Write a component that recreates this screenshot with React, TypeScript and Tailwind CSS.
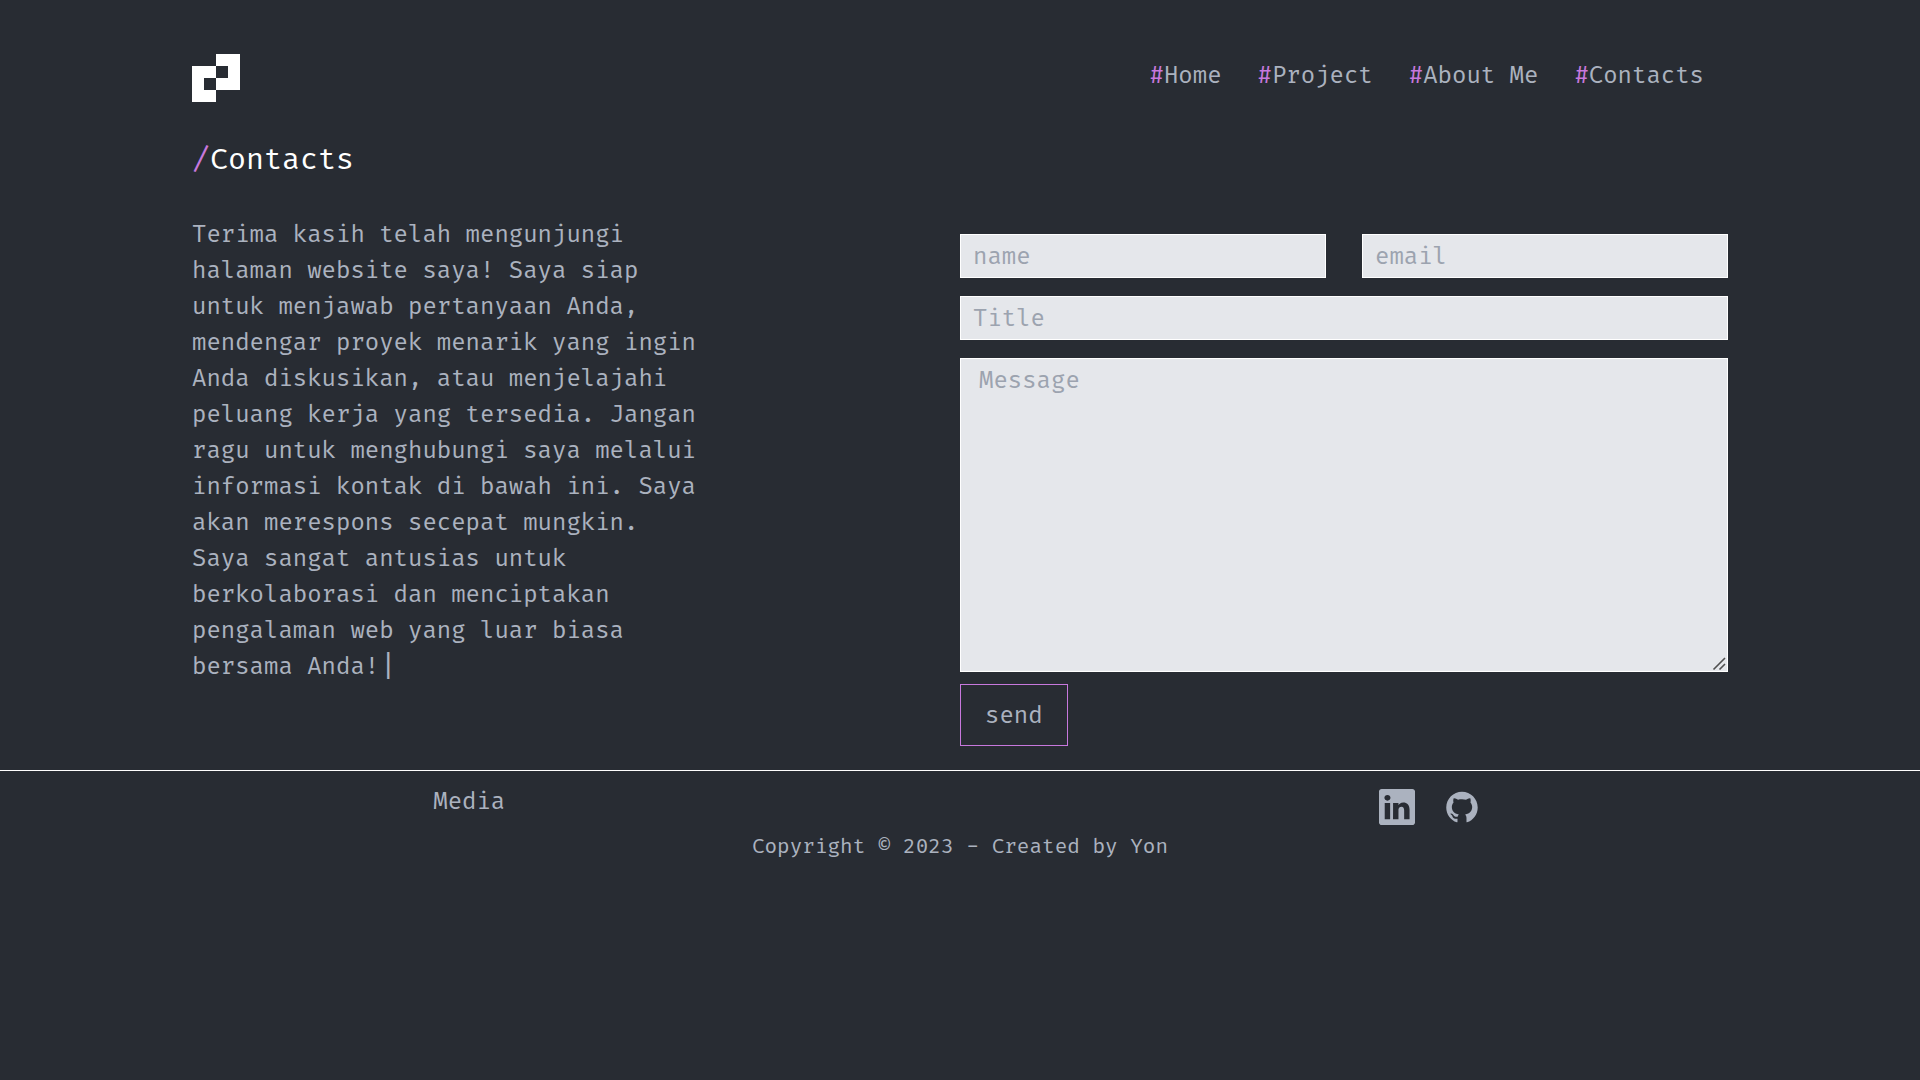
import { AiFillGithub } from "react-icons/ai";
import { BsLinkedin } from "react-icons/bs";

const links = ["Home", "Project", "About Me", "Contacts"];

const field =
  "h-11 w-full min-w-0 border border-white bg-[#e5e7eb] px-3 text-gray-800 placeholder:text-[#9ca3af]";

function Logo() {
  return (
    <svg viewBox="0 0 4 4" className="size-12 fill-white" shapeRendering="crispEdges" role="img" aria-label="Yon">
      <path d="M2 0h2v3H2V2h1V1H2zM0 1h2v1H1v1h1v1H0z" />
    </svg>
  );
}

export default function App() {
  return (
    <div className="min-h-screen bg-[#282c33] font-['Fira_Mono','Fira_Code','DejaVu_Sans_Mono',monospace] text-2xl/9 text-[#abb2bf]">
      <header className="mx-[10%] flex items-start justify-between pt-[54px]">
        <a href="#home">
          <Logo />
        </a>
        <nav className="flex gap-9 pt-[3px] pr-6">
          {links.map((label) => (
            <a key={label} href={"#" + label.toLowerCase().replace(" ", "-")}>
              <span className="text-[#c778dd]">#</span>
              {label}
            </a>
          ))}
        </nav>
      </header>

      <main className="mx-[10%] pt-[37px]">
        <h1 className="text-3xl/10 text-white">
          <span className="text-[#c778dd]">/</span>Contacts
        </h1>
        <div className="mt-[37px] flex items-start justify-between">
          <p className="w-1/3">
            Terima kasih telah mengunjungi halaman website saya! Saya siap untuk menjawab pertanyaan
            Anda, mendengar proyek menarik yang ingin Anda diskusikan, atau menjelajahi peluang
            kerja yang tersedia. Jangan ragu untuk menghubungi saya melalui informasi kontak di
            bawah ini. Saya akan merespons secepat mungkin. Saya sangat antusias untuk berkolaborasi
            dan menciptakan pengalaman web yang luar biasa bersama Anda!
            <span className="align-[-2px] text-3xl leading-none">|</span>
          </p>
          <form className="flex w-1/2 flex-col items-start pt-[18px]">
            <div className="flex w-full gap-9">
              <input type="text" aria-label="name" placeholder="name" className={field} />
              <input type="email" aria-label="email" placeholder="email" className={field} />
            </div>
            <input type="text" aria-label="Title" placeholder="Title" className={field + " mt-[18px]"} />
            <div className="relative mt-[18px] flex w-full">
              <textarea
                aria-label="Message"
                placeholder="Message"
                className="h-[314px] w-full resize-none border border-white bg-[#e5e7eb] px-[18px] py-[3px] text-gray-800 placeholder:text-[#9ca3af]"
              />
              <svg
                viewBox="0 0 16 16"
                className="pointer-events-none absolute right-0 bottom-0 size-4 fill-none stroke-[#505050]"
                strokeWidth="1.6"
                aria-hidden="true"
              >
                <path d="M1.5 13.5L13 2M7.5 13.5L13 8" />
              </svg>
            </div>
            <button type="button" className="mt-3 border border-[#c778dd] px-6 py-3">
              send
            </button>
          </form>
        </div>
      </main>

      <footer className="mt-6 border-t border-white">
        <div className="flex items-start justify-around pt-3">
          <p>Media</p>
          <div className="flex gap-[29px] px-[7px] pt-1.5">
            <a href="#linkedin" aria-label="LinkedIn">
              <BsLinkedin className="size-9" />
            </a>
            <a href="#github" aria-label="GitHub">
              <AiFillGithub className="size-9" />
            </a>
          </div>
        </div>
        <p className="mt-[5px] text-center text-[21px]/8">
          Copyright © 2023{" "}
          <span className="font-['Fira_Code','DejaVu_Sans_Mono',monospace] leading-none">-</span>{" "}
          Created by Yon
        </p>
      </footer>
    </div>
  );
}
